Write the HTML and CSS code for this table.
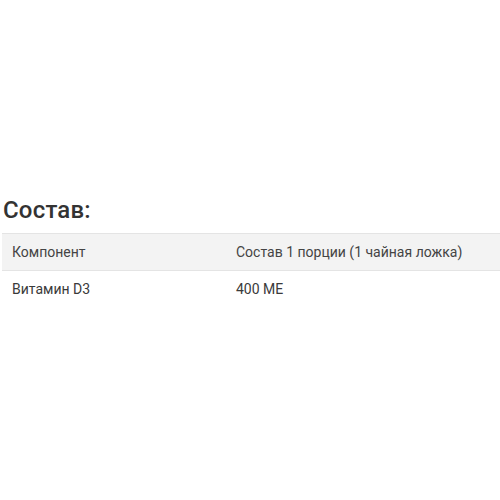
FILE: index.html
```html
<!DOCTYPE html>
<html lang="ru">
<head>
<meta charset="utf-8">
<link rel="stylesheet" href="styles.css">
</head>
<body>
<div class="page">
  <h2 class="title">Состав:</h2>
  <table class="comp">
    <thead>
      <tr><th class="c1">Компонент</th><th>Состав 1 порции (1 чайная ложка)</th></tr>
    </thead>
    <tbody>
      <tr><td class="c1">Витамин D3</td><td>400 МЕ</td></tr>
    </tbody>
  </table>
</div>
</body>
</html>
```
FILE: styles.css
```css
html, body { margin: 0; padding: 0; background: #fff; }
body { font-family: Roboto, "Noto Sans", sans-serif; color: #333; }
.page { padding: 196px 0 0 2px; }
.title { margin: 0 0 9px 1px; font-size: 24px; font-weight: 500; line-height: 28px; color: #333; letter-spacing: 0.2px; }
.comp { width: 498px; border-collapse: collapse; font-size: 14px; color: #3a3a3a; }
.comp th { background: #f3f3f3; font-weight: 400; text-align: left; height: 36px; padding: 0 10px; border-top: 1px solid #e4e4e4; border-bottom: 1px solid #e4e4e4; color: #444; }
.comp td { text-align: left; height: 36px; padding: 0 10px; }
.comp .c1 { width: 204px; }
```
